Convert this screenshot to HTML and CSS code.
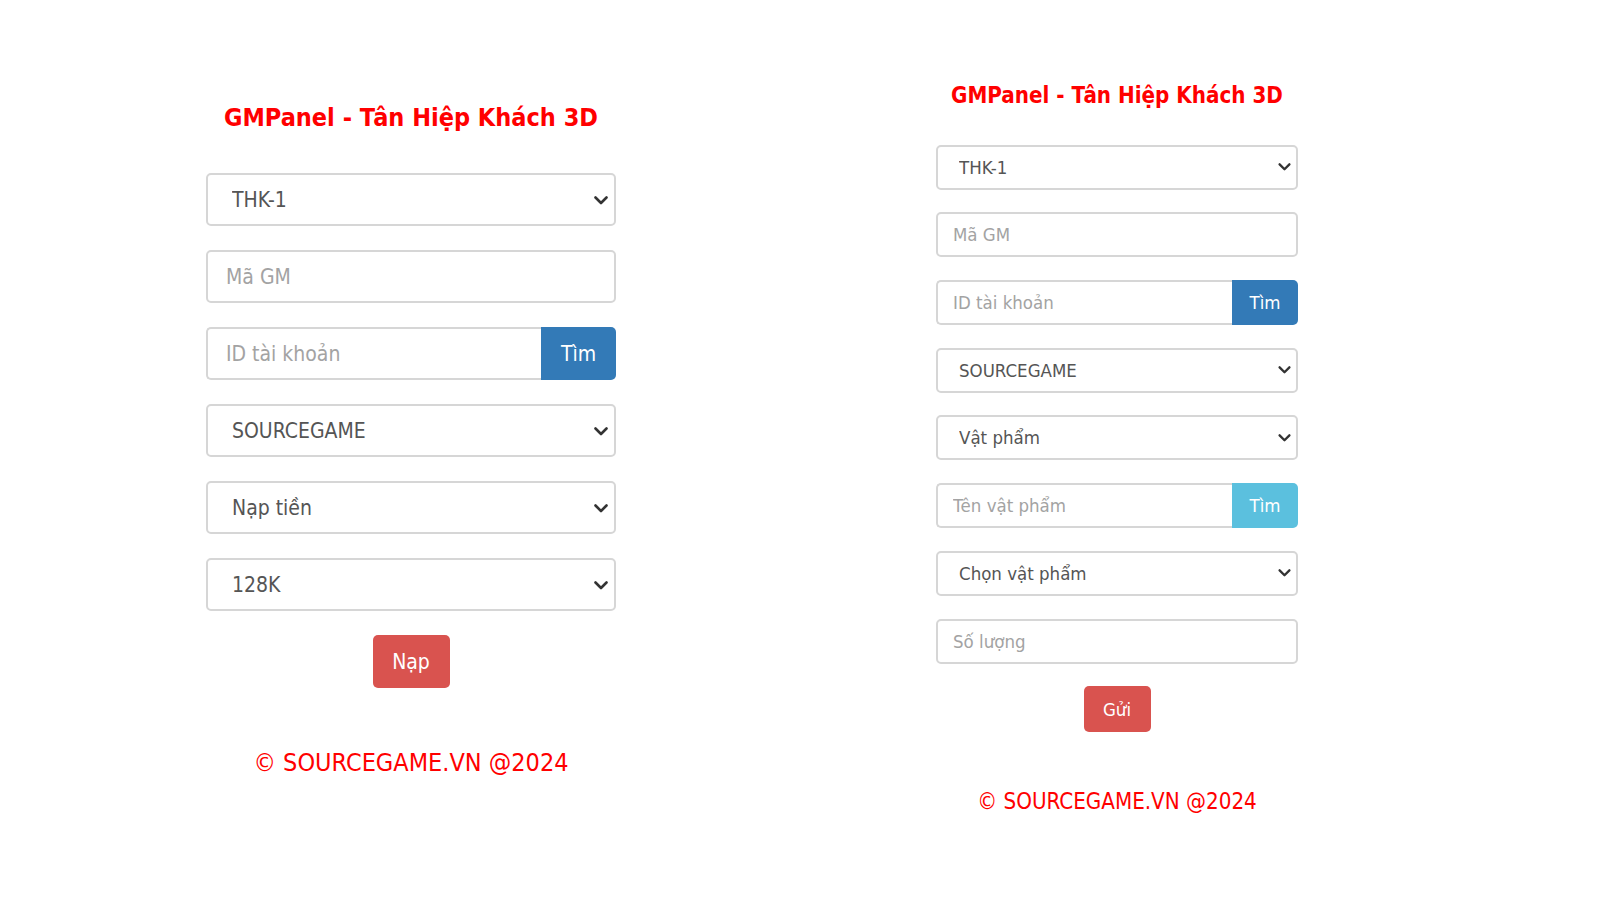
FILE: index.html
```html
<!DOCTYPE html>
<html lang="vi">
<head>
  <meta charset="UTF-8" />
  <meta name="viewport" content="width=device-width, initial-scale=1.0" />
  <title>GMPanel - Tân Hiệp Khách 3D</title>
  <link rel="stylesheet" href="styles.css">
</head>
<body>
  <div class="page">
    <!-- nap tien -->
    <div class="panel panel-big">
      <h2 class="panel-title">GMPanel - Tân Hiệp Khách 3D</h2>
      <div class="select-wrap">
        <select class="field">
          <option>THK-1</option>
        </select>
        <svg class="chev" viewBox="0 0 14 9"><path d="M1.5 1.5 7 7l5.5-5.5" /></svg>
      </div>
      <input class="field" type="text" placeholder="Mã GM" />
      <div class="input-group">
        <input class="field" type="text" placeholder="ID tài khoản" />
        <button class="btn btn-primary">Tìm</button>
      </div>
      <div class="select-wrap">
        <select class="field">
          <option>SOURCEGAME</option>
        </select>
        <svg class="chev" viewBox="0 0 14 9"><path d="M1.5 1.5 7 7l5.5-5.5" /></svg>
      </div>
      <div class="select-wrap">
        <select class="field">
          <option>Nạp tiền</option>
          <option>Vật phẩm</option>
        </select>
        <svg class="chev" viewBox="0 0 14 9"><path d="M1.5 1.5 7 7l5.5-5.5" /></svg>
      </div>
      <div class="select-wrap">
        <select class="field">
          <option>128K</option>
        </select>
        <svg class="chev" viewBox="0 0 14 9"><path d="M1.5 1.5 7 7l5.5-5.5" /></svg>
      </div>
      <div class="actions">
        <button class="btn btn-danger">Nạp</button>
      </div>
      <p class="copy">© SOURCEGAME.VN @2024</p>
    </div>

    <!-- gui vat pham -->
    <div class="panel panel-small">
      <h2 class="panel-title">GMPanel - Tân Hiệp Khách 3D</h2>
      <div class="select-wrap">
        <select class="field">
          <option>THK-1</option>
        </select>
        <svg class="chev" viewBox="0 0 14 9"><path d="M1.5 1.5 7 7l5.5-5.5" /></svg>
      </div>
      <input class="field" type="text" placeholder="Mã GM" />
      <div class="input-group">
        <input class="field" type="text" placeholder="ID tài khoản" />
        <button class="btn btn-primary">Tìm</button>
      </div>
      <div class="select-wrap">
        <select class="field">
          <option>SOURCEGAME</option>
        </select>
        <svg class="chev" viewBox="0 0 14 9"><path d="M1.5 1.5 7 7l5.5-5.5" /></svg>
      </div>
      <div class="select-wrap">
        <select class="field">
          <option>Vật phẩm</option>
          <option>Nạp tiền</option>
        </select>
        <svg class="chev" viewBox="0 0 14 9"><path d="M1.5 1.5 7 7l5.5-5.5" /></svg>
      </div>
      <div class="input-group">
        <input class="field" type="text" placeholder="Tên vật phẩm" />
        <button class="btn btn-info">Tìm</button>
      </div>
      <div class="select-wrap">
        <select class="field">
          <option>Chọn vật phẩm</option>
        </select>
        <svg class="chev" viewBox="0 0 14 9"><path d="M1.5 1.5 7 7l5.5-5.5" /></svg>
      </div>
      <input class="field" type="text" placeholder="Số lượng" />
      <div class="actions">
        <button class="btn btn-danger">Gửi</button>
      </div>
      <p class="copy">© SOURCEGAME.VN @2024</p>
    </div>
  </div>
</body>
</html>
```

FILE: styles.css
```css
body {
  margin: 0;
  background: #fff;
  font-family: "DejaVu Sans Condensed", "DejaVu Sans", sans-serif;
  color: #555;
}
.page {
  display: flex;
  align-items: flex-start;
  padding-left: 206px;
  gap: 320px;
}
.panel {
  display: flex;
  flex-direction: column;
}
.panel-title {
  margin: 0;
  text-align: center;
  color: #f00;
  font-weight: bold;
}
.field {
  display: block;
  width: 100%;
  box-sizing: border-box;
  margin: 0;
  border: 2px solid #d6d6d6;
  border-radius: 5px;
  background: #fff;
  color: #555;
  font-family: inherit;
  outline: none;
}
.field::placeholder {
  color: #a3a3a3;
}
select.field {
  appearance: none;
  -webkit-appearance: none;
}
.select-wrap {
  position: relative;
}
.chev {
  position: absolute;
  top: 50%;
  fill: none;
  stroke: #333;
  stroke-width: 2.6;
  stroke-linecap: round;
  stroke-linejoin: round;
  pointer-events: none;
}
.input-group {
  display: flex;
}
.input-group .field {
  flex: 1;
  border-radius: 5px 0 0 5px;
  border-right: none;
}
.btn {
  border: none;
  border-radius: 5px;
  color: #fff;
  font-family: inherit;
  cursor: pointer;
}
.input-group .btn {
  border-radius: 0 5px 5px 0;
}
.btn-primary {
  background: #337ab7;
}
.btn-info {
  background: #5bc0de;
}
.btn-danger {
  background: #d9534f;
}
.actions {
  display: flex;
  justify-content: center;
}
.copy {
  margin: 0;
  text-align: center;
  color: #f00;
}

/* left panel, bigger */
.panel-big {
  width: 410px;
  padding-top: 98px;
  gap: 24px;
}
.panel-big .panel-title {
  font-size: 25px;
  line-height: 40px;
  margin-bottom: 11px;
}
.panel-big .field {
  height: 53px;
  font-size: 21px;
  padding: 0 18px;
}
.panel-big select.field {
  padding-left: 24px;
}
.panel-big .chev {
  right: 8px;
  width: 14px;
  height: 9px;
  margin-top: -4px;
}
.panel-big .input-group .btn {
  width: 75px;
  font-size: 21px;
}
.panel-big .btn-danger {
  width: 77px;
  height: 53px;
  font-size: 21px;
}
.panel-big .copy {
  font-size: 25px;
  line-height: 40px;
  margin-top: 31px;
}

/* right panel */
.panel-small {
  width: 362px;
  padding-top: 78px;
  gap: 22.7px;
}
.panel-small .panel-title {
  font-size: 22.2px;
  line-height: 34px;
  margin-bottom: 10px;
}
.panel-small .field {
  height: 45px;
  font-size: 18.5px;
  padding: 0 15px;
}
.panel-small select.field {
  padding-left: 21px;
}
.panel-small .chev {
  right: 7px;
  width: 13px;
  height: 8px;
  margin-top: -4px;
}
.panel-small .input-group .btn {
  width: 66px;
  font-size: 18.5px;
}
.panel-small .btn-danger {
  width: 67px;
  height: 46px;
  font-size: 18.5px;
}
.panel-small .copy {
  font-size: 22.2px;
  line-height: 34px;
  margin-top: 29px;
}
```
